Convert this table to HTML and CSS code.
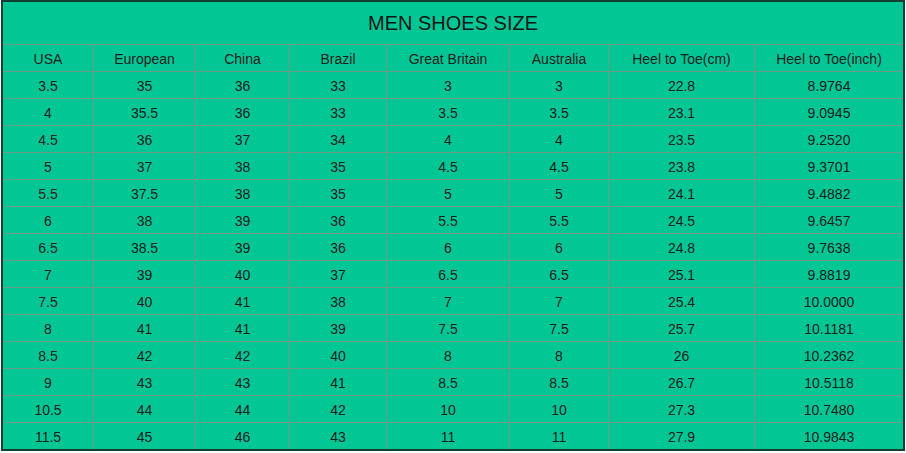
FILE: index.html
```html
<!DOCTYPE html>
<html>
<head>
<meta charset="utf-8">
<link rel="stylesheet" href="styles.css">
</head>
<body>
<div class="wrap">
<table class="size-table">
<colgroup>
<col class="c1"><col class="c2"><col class="c3"><col class="c4"><col class="c5"><col class="c6"><col class="c7"><col class="c8">
</colgroup>
<tr class="title-row"><td colspan="8" class="title">MEN SHOES SIZE</td></tr>
<tr><td>USA</td><td>European</td><td>China</td><td>Brazil</td><td>Great Britain</td><td>Australia</td><td>Heel to Toe(cm)</td><td>Heel to Toe(inch)</td></tr>
<tr><td>3.5</td><td>35</td><td>36</td><td>33</td><td>3</td><td>3</td><td>22.8</td><td>8.9764</td></tr>
<tr><td>4</td><td>35.5</td><td>36</td><td>33</td><td>3.5</td><td>3.5</td><td>23.1</td><td>9.0945</td></tr>
<tr><td>4.5</td><td>36</td><td>37</td><td>34</td><td>4</td><td>4</td><td>23.5</td><td>9.2520</td></tr>
<tr><td>5</td><td>37</td><td>38</td><td>35</td><td>4.5</td><td>4.5</td><td>23.8</td><td>9.3701</td></tr>
<tr><td>5.5</td><td>37.5</td><td>38</td><td>35</td><td>5</td><td>5</td><td>24.1</td><td>9.4882</td></tr>
<tr><td>6</td><td>38</td><td>39</td><td>36</td><td>5.5</td><td>5.5</td><td>24.5</td><td>9.6457</td></tr>
<tr><td>6.5</td><td>38.5</td><td>39</td><td>36</td><td>6</td><td>6</td><td>24.8</td><td>9.7638</td></tr>
<tr><td>7</td><td>39</td><td>40</td><td>37</td><td>6.5</td><td>6.5</td><td>25.1</td><td>9.8819</td></tr>
<tr><td>7.5</td><td>40</td><td>41</td><td>38</td><td>7</td><td>7</td><td>25.4</td><td>10.0000</td></tr>
<tr><td>8</td><td>41</td><td>41</td><td>39</td><td>7.5</td><td>7.5</td><td>25.7</td><td>10.1181</td></tr>
<tr><td>8.5</td><td>42</td><td>42</td><td>40</td><td>8</td><td>8</td><td>26</td><td>10.2362</td></tr>
<tr><td>9</td><td>43</td><td>43</td><td>41</td><td>8.5</td><td>8.5</td><td>26.7</td><td>10.5118</td></tr>
<tr><td>10.5</td><td>44</td><td>44</td><td>42</td><td>10</td><td>10</td><td>27.3</td><td>10.7480</td></tr>
<tr class="last"><td>11.5</td><td>45</td><td>46</td><td>43</td><td>11</td><td>11</td><td>27.9</td><td>10.9843</td></tr>
</table>
</div>
</body>
</html>
```
FILE: styles.css
```css
html, body {
  margin: 0;
  padding: 0;
  background: #ffffff;
}
.wrap {
  padding: 0 1px 0 1px;
}
.size-table {
  width: 904px;
  table-layout: fixed;
  border-collapse: separate;
  border-spacing: 0;
  border: 2px solid #123f31;
  background: #02c795;
  font-family: "Liberation Sans", Arial, sans-serif;
  font-size: 14px;
  color: #1a211d;
}
.c1 { width: 91px; }
.c2 { width: 102px; }
.c3 { width: 94px; }
.c4 { width: 97px; }
.c5 { width: 123px; }
.c6 { width: 99px; }
.c7 { width: 146px; }
.c8 { width: 148px; }
.size-table td {
  border-right: 1px solid #6f9a88;
  border-bottom: 1px solid #6f9a88;
  text-align: center;
  vertical-align: middle;
  padding: 1px 0 0 0;
  height: 25px;
}
.size-table td:last-child {
  border-right: none;
}
.size-table tr.last td {
  border-bottom: none;
}
.size-table td.title {
  height: 41px;
  padding-top: 1px;
  font-size: 20px;
  color: #121614;
}
```
